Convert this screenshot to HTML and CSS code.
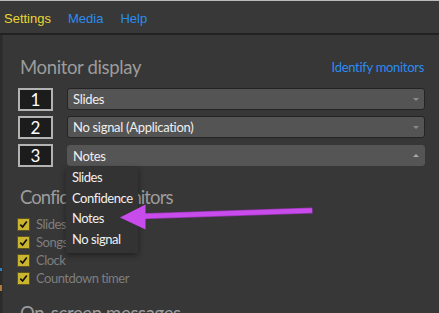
FILE: index.html
```html
<!DOCTYPE html>
<html>
<head>
<meta charset="utf-8">
<link rel="stylesheet" href="styles.css">
</head>
<body>
<div class="topline"></div>
<nav class="menubar">
  <a class="menu-item active">Settings</a>
  <a class="menu-item">Media</a>
  <a class="menu-item">Help</a>
</nav>
<div class="page">
  <aside class="rail">
    <span class="blip blip-blue"></span>
    <span class="blip blip-orange"></span>
  </aside>
  <main class="content">
    <div class="section-head">
      <h2 class="heading">Monitor display</h2>
      <a class="link">Identify monitors</a>
    </div>
    <div class="monitors">
      <div class="monitor-row">
        <div class="num">1</div>
        <div class="select"><span>Slides</span><span class="caret down"></span></div>
      </div>
      <div class="monitor-row">
        <div class="num">2</div>
        <div class="select"><span>No signal (Application)</span><span class="caret down"></span></div>
      </div>
      <div class="monitor-row">
        <div class="num">3</div>
        <div class="select-wrap">
          <div class="select open"><span>Notes</span><span class="caret up"></span></div>
          <ul class="dropdown">
            <li>Slides</li>
            <li>Confidence</li>
            <li>Notes</li>
            <li>No signal</li>
          </ul>
        </div>
      </div>
    </div>
    <h2 class="heading heading-conf">Confidence monitors</h2>
    <ul class="checklist">
      <li><span class="check"><svg viewBox="0 0 11 11" width="11" height="11"><path d="M2.3 5.6 L4.6 8 L8.8 2.4" fill="none" stroke="#111" stroke-width="1.7"/></svg></span>Slides</li>
      <li><span class="check"><svg viewBox="0 0 11 11" width="11" height="11"><path d="M2.3 5.6 L4.6 8 L8.8 2.4" fill="none" stroke="#111" stroke-width="1.7"/></svg></span>Songs: lyrics only</li>
      <li><span class="check"><svg viewBox="0 0 11 11" width="11" height="11"><path d="M2.3 5.6 L4.6 8 L8.8 2.4" fill="none" stroke="#111" stroke-width="1.7"/></svg></span>Clock</li>
      <li><span class="check"><svg viewBox="0 0 11 11" width="11" height="11"><path d="M2.3 5.6 L4.6 8 L8.8 2.4" fill="none" stroke="#111" stroke-width="1.7"/></svg></span>Countdown timer</li>
    </ul>
    <h2 class="heading heading-msg">On-screen messages</h2>
  </main>
</div>
<svg class="annotation" width="439" height="313" viewBox="0 0 439 313">
  <line x1="142" y1="216.2" x2="312.5" y2="210.5" stroke="#9a36b8" stroke-width="6"/>
  <line x1="142" y1="216.2" x2="312" y2="210.5" stroke="#c84ceb" stroke-width="4.6"/>
  <polygon points="120,217.5 145.5,204.5 145.5,229.5" fill="#c84ceb"/>
</svg>
</body>
</html>
```
FILE: styles.css
```css
* { box-sizing: border-box; }
html, body { margin: 0; padding: 0; }
body {
  width: 439px;
  height: 313px;
  overflow: hidden;
  background: #373737;
  font-family: Lato, "Open Sans", sans-serif;
  position: relative;
}
.topline { height: 1px; background: #b9b9b9; }
.menubar {
  height: 34px;
  display: flex;
  align-items: center;
  gap: 17px;
  padding: 3px 0 0 4px;
  background: #383838;
  border-bottom: 2px solid #222;
  font-family: "Liberation Sans", Arial, sans-serif;
  font-size: 13px;
}
.menu-item { color: #2a8cf0; }
.menu-item.active { color: #e8d630; }
.page { display: flex; height: 278px; }
.rail {
  width: 3px;
  background: #2b2b2b;
  border-right: 1px solid #303030;
  display: flex;
  flex-direction: column;
  padding-top: 233px;
}
.blip { display: block; width: 2px; height: 3px; }
.blip-blue { background: #2a7fc8; }
.blip-orange { background: #b07a3a; height: 6px; margin-top: 14px; }
.content {
  flex: 1;
  padding: 20px 14px 0 17px;
}
.section-head {
  display: flex;
  align-items: center;
  justify-content: space-between;
}
.heading {
  margin: 0;
  font-weight: normal;
  font-size: 18.5px;
  letter-spacing: -0.35px;
  line-height: 24px;
  color: #9c9c9c;
}
.link {
  color: #2a8cf0;
  font-size: 13px;
  letter-spacing: -0.3px;
  line-height: 16px;
  margin-right: 1px;
}
.monitors {
  margin-top: 9px;
  display: flex;
  flex-direction: column;
  gap: 5px;
}
.monitor-row {
  display: flex;
  align-items: flex-start;
  gap: 14px;
  height: 23px;
  margin-left: -2px;
}
.num {
  width: 35px;
  height: 23px;
  border: 2px solid #b3b3b3;
  background: #1c1c1c;
  color: #fff;
  font-size: 17px;
  line-height: 19px;
  text-align: center;
}
.select, .select-wrap { flex: 1; }
.select-wrap { position: relative; }
.select {
  height: 22px;
  background: #545454;
  border: 1px solid #242424;
  border-radius: 3px;
  display: flex;
  align-items: center;
  justify-content: space-between;
  padding: 0 5px 0 5px;
  color: #efefef;
  font-size: 13px;
  letter-spacing: -0.3px;
}
.select.open {
  border-color: #555;
  background: #555;
  height: 21px;
  margin-top: 1px;
}
.caret { width: 0; height: 0; border-left: 3px solid transparent; border-right: 3px solid transparent; }
.caret.down { border-top: 3px solid #8a8a8a; }
.caret.up { border-bottom: 3px solid #a8a8a8; }
.dropdown {
  position: absolute;
  left: -1px;
  top: 23px;
  width: 72px;
  margin: 0;
  padding: 0 0 4px 6px;
  list-style: none;
  background: #333;
  box-shadow: 0 2px 6px rgba(0, 0, 0, 0.45);
  color: #f0f0f0;
  font-size: 13px;
  letter-spacing: -0.45px;
  line-height: 20.5px;
  z-index: 2;
}
.heading-conf { margin-top: 18px; letter-spacing: -0.9px; }
.checklist {
  list-style: none;
  margin: 6px 0 0 0;
  padding: 0;
}
.checklist li {
  height: 18px;
  display: flex;
  align-items: center;
  gap: 7px;
  color: #7e7e7e;
  font-size: 13px;
  letter-spacing: -0.5px;
  margin-left: -2px;
}
.check {
  width: 11px;
  height: 11px;
  background: #cbb52e;
  outline: 1px solid #5c531d;
  display: block;
}
.check svg { display: block; }
.heading-msg { margin-top: 14px; }
.annotation {
  position: absolute;
  left: 0;
  top: 0;
  pointer-events: none;
  z-index: 5;
}
```
